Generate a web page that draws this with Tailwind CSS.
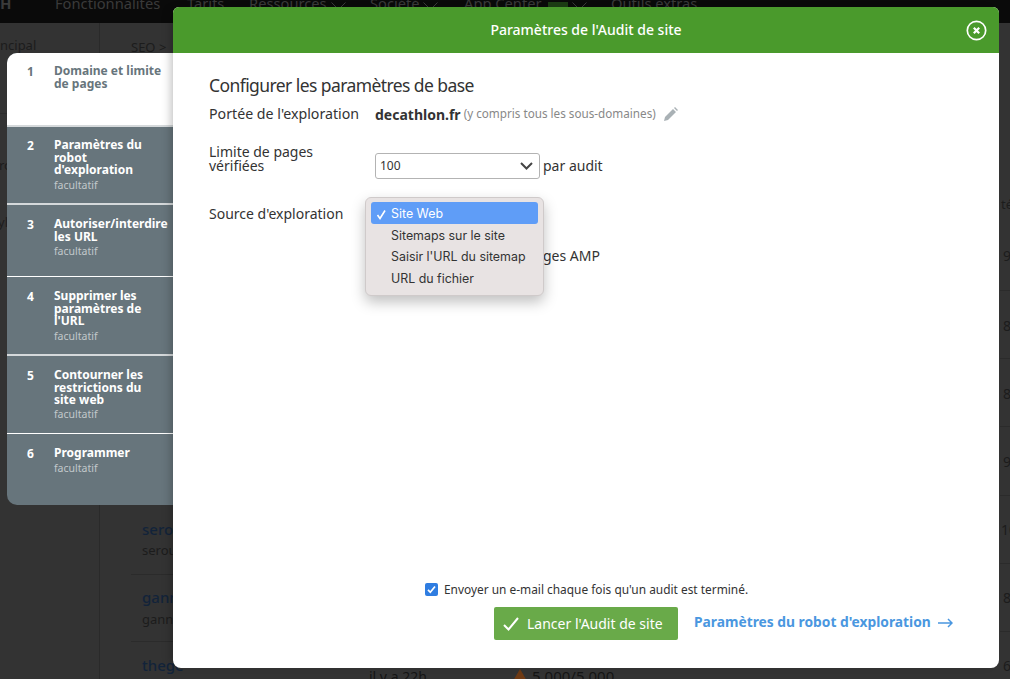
<!DOCTYPE html>
<html lang="fr">
<head>
    <meta charset="UTF-8">
    <title>Paramètres de l'Audit de site</title>
    <script src="https://cdn.jsdelivr.net/npm/@tailwindcss/browser@4"></script>
</head>
<body class="bg-[#333333] font-['Noto_Sans',sans-serif]">
<div class="relative w-[1010px] h-[679px] overflow-hidden bg-[#333333]">

    <!-- page behind the overlay -->
    <header class="flex items-center h-[23px] bg-[#0a0a0a] text-[#3a3a3a] text-[14.7px] overflow-hidden">
        <span class="font-bold text-[15px] w-[55px] -mt-[16px]">H</span>
        <nav class="flex -mt-[16px] whitespace-nowrap">
            <span class="w-[132px]">Fonctionnalités</span>
            <span class="w-[62px]">Tarifs</span>
            <span class="w-[121px] flex items-center">Ressources<svg class="ml-[4px] mt-[5px]" width="15" height="8" viewBox="0 0 15 8" fill="none" stroke="#3a3a3a"><path d="M.5.5l7 7 7-7"/></svg></span>
            <span class="w-[94px] flex items-center">Société<svg class="ml-[3px] mt-[5px]" width="15" height="8" viewBox="0 0 15 8" fill="none" stroke="#3a3a3a"><path d="M.5.5l7 7 7-7"/></svg></span>
            <span class="w-[147px] flex items-center">App Center<span class="ml-[6px] mt-[6px] w-[20px] h-[9px] bg-[#1c3d14]"></span><svg class="ml-[4px] mt-[5px]" width="15" height="8" viewBox="0 0 15 8" fill="none" stroke="#3a3a3a"><path d="M.5.5l7 7 7-7"/></svg></span>
            <span>Outils extras</span>
        </nav>
    </header>
    <div class="absolute left-[99px] top-[23px] bottom-0 w-px bg-[#2a2a2a]"></div>
    <div class="absolute left-0 top-[113px] w-[99px] h-px bg-[#2c2c2c]"></div>
    <span class="absolute left-0 top-[36px] text-[13px] text-[#1c1c1c]">ncipal</span>
    <span class="absolute -left-[1px] top-[156px] text-[13px] text-[#1c1c1c]">ro</span>
    <span class="absolute -left-[2px] top-[213px] text-[13px] text-[#1c1c1c]">yla</span>
    <span class="absolute left-[131px] top-[38px] text-[13px] text-[#1c1c1c]">SEO &gt;</span>
    <div class="absolute left-[142px] top-[518px] text-[15px] font-medium text-[#12233a]">sero</div>
    <div class="absolute left-[142px] top-[541px] text-[13px] text-[#1c1c1c]">serou</div>
    <div class="absolute left-[142px] top-[586px] text-[15px] font-medium text-[#12233a]">gann</div>
    <div class="absolute left-[142px] top-[610px] text-[13px] text-[#1c1c1c]">ganne</div>
    <div class="absolute left-[142px] top-[654px] text-[15px] font-medium text-[#12233a]">thege</div>
    <div class="absolute left-[131px] w-[42px] top-[574px] h-px bg-[#2b2b2b]"></div>
    <div class="absolute left-[131px] w-[42px] top-[641px] h-px bg-[#2b2b2b]"></div>
    <span class="absolute left-[369px] top-[666px] text-[14px] text-[#151515]">il y a 22h</span>
    <svg class="absolute left-[513px] top-[669px]" width="14" height="12" viewBox="0 0 14 12"><path d="M7 0l7 12H0z" fill="#6e3a14"/></svg>
    <span class="absolute left-[532px] top-[665px] text-[15px] text-[#151515]">5.000/5.000</span>

    <!-- right edge of the table -->
    <div class="absolute left-[1000px] right-0 top-[290px] h-px bg-[#2b2b2b]"></div>
    <div class="absolute left-[1000px] right-0 top-[358px] h-px bg-[#2b2b2b]"></div>
    <div class="absolute left-[1000px] right-0 top-[426px] h-px bg-[#2b2b2b]"></div>
    <div class="absolute left-[1000px] right-0 top-[495px] h-px bg-[#2b2b2b]"></div>
    <div class="absolute left-[1000px] right-0 top-[563px] h-px bg-[#2b2b2b]"></div>
    <div class="absolute left-[1000px] right-0 top-[631px] h-px bg-[#2b2b2b]"></div>
    <span class="absolute left-[1001px] top-[195px] text-[13px] text-[#1c1c1c]">té</span>
    <span class="absolute left-[1003px] top-[245px] text-[14px] text-[#1c1c1c]">9</span>
    <span class="absolute left-[1003px] top-[315px] text-[14px] text-[#1c1c1c]">8</span>
    <span class="absolute left-[1003px] top-[383px] text-[14px] text-[#1c1c1c]">8</span>
    <span class="absolute left-[1003px] top-[451px] text-[14px] text-[#1c1c1c]">9</span>
    <span class="absolute left-[1001px] top-[519px] text-[14px] text-[#1c1c1c]">10</span>
    <span class="absolute left-[1003px] top-[587px] text-[14px] text-[#1c1c1c]">8</span>
    <span class="absolute left-[1003px] top-[655px] text-[14px] text-[#1c1c1c]">6</span>

    <!-- steps panel -->
    <ol class="absolute left-[7px] top-[53px] w-[166px] h-[452px] rounded-l-[10px] overflow-hidden bg-[#67757c] flex flex-col text-white">
        <li class="flex h-[72px] bg-white text-[#67757c] pt-[12px] pl-[20px]">
            <span class="w-[27px] text-[12px] font-bold leading-[14px]">1</span>
            <p class="text-[12px] font-bold leading-[12.5px] w-[112px]">Domaine et limite de pages</p>
        </li>
        <li class="flex h-[78px] border-t-2 border-[#d5d9db] pt-[12px] pl-[20px]">
            <span class="w-[27px] text-[12px] font-bold leading-[14px]">2</span>
            <div><p class="text-[12px] font-bold leading-[12.5px] w-[100px]">Paramètres du robot d'exploration</p><p class="text-[10.5px] leading-[12px] mt-[2px] text-[#c2c8cb]">facultatif</p></div>
        </li>
        <li class="flex h-[73px] border-t-2 border-[#d5d9db] pt-[13px] pl-[20px]">
            <span class="w-[27px] text-[12px] font-bold leading-[14px]">3</span>
            <div><p class="text-[12px] font-bold leading-[12.5px] w-[118px] whitespace-nowrap">Autoriser/interdire<br>les URL</p><p class="text-[10.5px] leading-[12px] mt-[2px] text-[#c2c8cb]">facultatif</p></div>
        </li>
        <li class="flex h-[78px] border-t border-white pt-[13px] pl-[20px]">
            <span class="w-[27px] text-[12px] font-bold leading-[14px]">4</span>
            <div><p class="text-[12px] font-bold leading-[12.5px] w-[100px]">Supprimer les paramètres de l'URL</p><p class="text-[10.5px] leading-[12px] mt-[2px] text-[#c2c8cb]">facultatif</p></div>
        </li>
        <li class="flex h-[79px] border-t-2 border-[#d5d9db] pt-[13px] pl-[20px]">
            <span class="w-[27px] text-[12px] font-bold leading-[14px]">5</span>
            <div><p class="text-[12px] font-bold leading-[12.5px] w-[100px]">Contourner les restrictions du site web</p><p class="text-[10.5px] leading-[12px] mt-[1px] text-[#c2c8cb]">facultatif</p></div>
        </li>
        <li class="flex flex-1 border-t border-white pt-[13px] pl-[20px]">
            <span class="w-[27px] text-[12px] font-bold leading-[14px]">6</span>
            <div><p class="text-[12px] font-bold leading-[12.5px]">Programmer</p><p class="text-[10.5px] leading-[12px] mt-[2px] text-[#c2c8cb]">facultatif</p></div>
        </li>
    </ol>

    <!-- dialog -->
    <section class="absolute left-[173px] top-[7px] w-[826px] h-[661px] rounded-t-[6px] rounded-b-[8px] overflow-hidden bg-white flex flex-col shadow-[-6px_0_10px_-4px_rgba(0,0,0,0.25)]">
        <div class="relative flex items-center justify-center h-[46px] pb-[1px] bg-[#4a9a2c] text-white text-[14px] font-medium">
            Paramètres de l'Audit de site
            <svg class="absolute right-[12px] top-[13px]" width="21" height="21" viewBox="0 0 21 21" fill="none" stroke="#fff">
                <circle cx="10.5" cy="10.5" r="9.2" stroke-width="1.7"/>
                <path d="M7.8 7.8l5.4 5.4M13.2 7.8l-5.4 5.4" stroke-width="2.2"/>
            </svg>
        </div>

        <div class="relative flex-1 pl-[36px] pt-[21px] text-[#333]">
            <h2 class="text-[17.5px] leading-[22px] tracking-[-0.58px] text-[#333]">Configurer les paramètres de base</h2>

            <div class="flex items-center mt-[8px] h-[20px] text-[14.2px]">
                <span class="w-[166px]">Portée de l'exploration</span>
                <span class="font-bold text-[14px]">decathlon.fr</span>
                <span class="ml-[3px] text-[11.7px] text-[#888]">(y compris tous les sous-domaines)</span>
                <svg class="ml-[7px]" width="15" height="15" viewBox="0 0 15 15" fill="#a9b1b5"><path d="M1 14l1-4 8-8 3 3-8 8zM11 1l1-1 3 3-1 1z"/></svg>
            </div>

            <div class="flex mt-[18px] h-[34px] text-[14px]">
                <span class="w-[166px] leading-[14.5px] self-center">Limite de pages<br>vérifiées</span>
                <div class="flex items-center self-start mt-[11px]">
                    <div class="flex items-center justify-between w-[165px] h-[26px] border border-[#b3b3b3] rounded-[3px] pl-[4px] pr-[6px] text-[12px]">
                        100
                        <svg width="13" height="8" viewBox="0 0 13 8" fill="none" stroke="#444" stroke-width="2"><path d="M1 1l5.500 5.500L12 1"/></svg>
                    </div>
                    <span class="ml-[3px] -mt-[2px]">par audit</span>
                </div>
            </div>

            <div class="flex items-center mt-[27px] h-[20px] text-[14px]">
                <span>Source d'exploration</span>
            </div>
            <span class="absolute left-[370px] top-[192px] text-[14px]">ges AMP</span>

            <!-- open select menu -->
            <ul class="absolute left-[192px] top-[144px] w-[179px] h-[99px] rounded-[6px] border border-[#cfcaca] bg-[#e8e3e3] shadow-[0_6px_14px_rgba(0,0,0,0.25)] p-[5px] text-[12.4px] text-[#333] font-['Inter',sans-serif]">
                <li class="flex items-center h-[22px] pt-[2px] rounded-[3px] -mt-px bg-[#5f9df7] text-white">
                    <svg class="ml-[5px] mr-[4px]" width="11" height="11" viewBox="0 0 11 11" fill="none" stroke="#fff" stroke-width="1.6"><path d="M1.500 6l2.500 3.500L9 1.500"/></svg>
                    Site Web
                </li>
                <li class="h-[21.500px] leading-[24px] pl-[20px]">Sitemaps sur le site</li>
                <li class="h-[21.500px] leading-[22.500px] pl-[20px] whitespace-nowrap">Saisir l'URL du sitemap</li>
                <li class="h-[21.500px] leading-[24px] pl-[20px]">URL du fichier</li>
            </ul>

            <!-- footer -->
            <label class="absolute left-[252px] top-[528px] flex items-center text-[11.9px] text-[#333]">
                <span class="flex items-center justify-center w-[13px] h-[13px] rounded-[2px] bg-[#2f7de1] mr-[6px]">
                    <svg width="9" height="9" viewBox="0 0 9 9" fill="none" stroke="#fff" stroke-width="1.700"><path d="M1 4.800l2.300 2.500L8 1.500"/></svg>
                </span>
                Envoyer un e-mail chaque fois qu'un audit est terminé.
            </label>
            <div class="absolute left-[321px] top-[554px] flex items-center">
                <button class="flex items-center w-[184px] h-[33px] rounded-[2px] bg-[#69aa49] text-white text-[14px] pl-[9px]">
                    <svg class="mr-[8px]" width="16" height="14" viewBox="0 0 16 14" fill="none" stroke="#fff" stroke-width="2"><path d="M1 8l4.500 4.500L15 1"/></svg>
                    Lancer l'Audit de site
                </button>
                <a class="ml-[16px] -mt-[2px] flex items-center text-[13.8px] font-bold text-[#4a97e0] whitespace-nowrap">
                    Paramètres du robot d'exploration
                    <svg class="ml-[7px]" width="15" height="10" viewBox="0 0 15 10" fill="none" stroke="#4a97e0" stroke-width="1.500"><path d="M0 5h14M10 1l4 4-4 4"/></svg>
                </a>
            </div>
        </div>
    </section>
</div>
</body>
</html>
